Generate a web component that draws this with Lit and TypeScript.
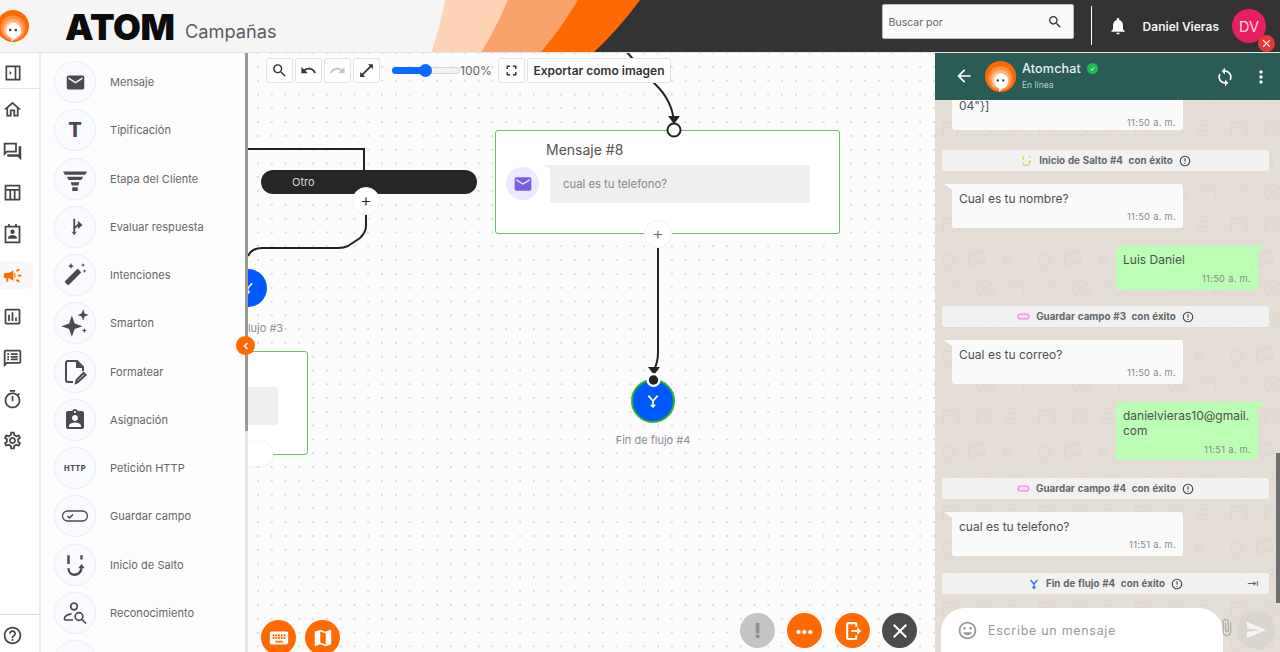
import { LitElement, html, css, unsafeCSS } from "lit";
import { customElement } from "lit/decorators.js";

const P: Record<string, string> = {
  email: "M20 4H4c-1.1 0-2 .9-2 2v12c0 1.1.9 2 2 2h16c1.1 0 2-.9 2-2V6c0-1.1-.9-2-2-2zm0 4l-8 5-8-5V6l8 5 8-5v2z",
  home: "M12 5.69l5 4.5V18h-2v-6H9v6H7v-7.81l5-4.5M12 3L2 12h3v8h6v-6h2v6h6v-8h3L12 3z",
  forum: "M15 4v7H5.17L4 12.17V4h11m2-2H2v15l4-4h11V2zm5 4h-3v9H6v3h12l4 4V6z",
  campaign: "M18 11v2h4v-2h-4zm-2 6.61c.96.71 2.21 1.65 3.2 2.39.4-.53.8-1.07 1.2-1.6-.99-.74-2.24-1.68-3.2-2.4-.4.54-.8 1.08-1.2 1.61zM20.4 5.6c-.4-.53-.8-1.07-1.2-1.6-.99.74-2.24 1.68-3.2 2.4.4.53.8 1.07 1.2 1.6.96-.72 2.21-1.65 3.2-2.4zM4 9c-1.1 0-2 .9-2 2v2c0 1.1.9 2 2 2h1v4h2v-4h1l5 3V6L8 9H4zm11.5 3c0-1.33-.58-2.53-1.5-3.35v6.69c.92-.81 1.5-2.01 1.5-3.34z",
  assess: "M19 3H5c-1.1 0-2 .9-2 2v14c0 1.1.9 2 2 2h14c1.1 0 2-.9 2-2V5c0-1.1-.9-2-2-2zm0 16H5V5h14v14zM7 10h2v7H7zm4-3h2v10h-2zm4 6h2v4h-2z",
  list: "M20 2H4c-1.1 0-2 .9-2 2v18l4-4h14c1.1 0 2-.9 2-2V4c0-1.1-.9-2-2-2zm0 14H5.17L4 17.17V4h16v12zM6 12h2v2H6zm0-3h2v2H6zm0-3h2v2H6zm4 6h8v2h-8zm0-3h8v2h-8zm0-3h8v2h-8z",
  timer: "M15 1H9v2h6V1zm-4 13h2V8h-2v6zm8.03-6.61l1.42-1.42c-.43-.51-.9-.99-1.41-1.41l-1.42 1.42C16.07 4.74 14.12 4 12 4c-4.97 0-9 4.03-9 9s4.02 9 9 9 9-4.03 9-9c0-2.12-.74-4.07-1.97-5.61zM12 20c-3.87 0-7-3.13-7-7s3.13-7 7-7 7 3.13 7 7-3.13 7-7 7z",
  gear: "M19.43 12.98c.04-.32.07-.64.07-.98 0-.34-.03-.66-.07-.98l2.11-1.65c.19-.15.24-.42.12-.64l-2-3.46c-.09-.16-.26-.25-.44-.25-.06 0-.12.01-.17.03l-2.49 1c-.52-.4-1.08-.73-1.69-.98l-.38-2.65C14.46 2.18 14.25 2 14 2h-4c-.25 0-.46.18-.49.42l-.38 2.65c-.61.25-1.17.59-1.69.98l-2.49-1c-.06-.02-.12-.03-.18-.03-.17 0-.34.09-.43.25l-2 3.46c-.13.22-.07.49.12.64l2.11 1.65c-.04.32-.07.65-.07.98 0 .33.03.66.07.98l-2.11 1.65c-.19.15-.24.42-.12.64l2 3.46c.09.16.26.25.44.25.06 0 .12-.01.17-.03l2.49-1c.52.4 1.08.73 1.69.98l.38 2.65c.03.24.24.42.49.42h4c.25 0 .46-.18.49-.42l.38-2.65c.61-.25 1.17-.59 1.69-.98l2.49 1c.06.02.12.03.18.03.17 0 .34-.09.43-.25l2-3.46c.12-.22.07-.49-.12-.64l-2.11-1.65zm-1.98-1.71c.04.31.05.52.05.73 0 .21-.02.43-.05.73l-.14 1.13.89.7 1.08.84-.7 1.21-1.27-.51-1.04-.42-.9.68c-.43.32-.84.56-1.25.73l-1.06.43-.16 1.13-.2 1.35h-1.4l-.19-1.35-.16-1.13-1.06-.43c-.43-.18-.83-.41-1.23-.71l-.91-.7-1.06.43-1.27.51-.7-1.21 1.08-.84.89-.7-.14-1.13c-.03-.31-.05-.54-.05-.74s.02-.43.05-.73l.14-1.13-.89-.7-1.08-.84.7-1.21 1.27.51 1.04.42.9-.68c.43-.32.84-.56 1.25-.73l1.06-.43.16-1.13.2-1.35h1.39l.19 1.35.16 1.13 1.06.43c.43.18.83.41 1.23.71l.91.7 1.06-.43 1.27-.51.7 1.21-1.07.85-.89.7.14 1.13zM12 8c-2.21 0-4 1.79-4 4s1.79 4 4 4 4-1.79 4-4-1.79-4-4-4zm0 6c-1.1 0-2-.9-2-2s.9-2 2-2 2 .9 2 2-.9 2-2 2z",
  help: "M11 18h2v-2h-2v2zm1-16C6.48 2 2 6.48 2 12s4.48 10 10 10 10-4.48 10-10S17.52 2 12 2zm0 18c-4.41 0-8-3.59-8-8s3.59-8 8-8 8 3.59 8 8-3.59 8-8 8zm0-14c-2.21 0-4 1.79-4 4h2c0-1.1.9-2 2-2s2 .9 2 2c0 2-3 1.75-3 5h2c0-2.25 3-2.5 3-5 0-2.21-1.79-4-4-4z",
  search: "M15.5 14h-.79l-.28-.27C15.41 12.59 16 11.11 16 9.5 16 5.91 13.09 3 9.5 3S3 5.91 3 9.5 5.91 16 9.5 16c1.61 0 3.09-.59 4.23-1.57l.27.28v.79l5 4.99L20.49 19l-4.99-5zm-6 0C7.01 14 5 11.99 5 9.5S7.01 5 9.5 5 14 7.01 14 9.5 11.99 14 9.5 14z",
  undo: "M12.5 8c-2.65 0-5.05.99-6.9 2.6L2 7v9h9l-3.62-3.62c1.39-1.16 3.16-1.88 5.12-1.88 3.54 0 6.55 2.31 7.6 5.5l2.37-.78C21.08 11.03 17.15 8 12.5 8z",
  redo: "M18.4 10.6C16.55 8.99 14.15 8 11.5 8c-4.65 0-8.58 3.03-9.96 7.22L3.9 16c1.05-3.19 4.05-5.5 7.6-5.5 1.95 0 3.73.72 5.12 1.88L13 16h9V7l-3.6 3.6z",
  expand: "M21 3h-7l2.6 2.6L5.6 16.6 3 14v7h7l-2.6-2.6 11-11L21 10z",
  full: "M7 14H5v5h5v-2H7v-3zm-2-4h2V7h3V5H5v5zm12 7h-3v2h5v-5h-2v3zM14 5v2h3v3h2V5h-5z",
  bell: "M12 22c1.1 0 2-.9 2-2h-4c0 1.1.9 2 2 2zm6-6v-5c0-3.07-1.63-5.64-4.5-6.32V4c0-.83-.67-1.5-1.5-1.5s-1.5.67-1.5 1.5v.68C7.64 5.36 6 7.92 6 11v5l-2 2v1h16v-1l-2-2z",
  back: "M20 11H7.83l5.59-5.59L12 4l-8 8 8 8 1.41-1.41L7.83 13H20v-2z",
  sync: "M12 4V1L8 5l4 4V6c3.31 0 6 2.69 6 6 0 1.01-.25 1.97-.7 2.8l1.46 1.46C19.54 15.03 20 13.57 20 12c0-4.42-3.58-8-8-8zm0 14c-3.31 0-6-2.69-6-6 0-1.01.25-1.97.7-2.8L5.24 7.74C4.46 8.97 4 10.43 4 12c0 4.42 3.58 8 8 8v3l4-4-4-4v3z",
  more: "M12 8c1.1 0 2-.9 2-2s-.9-2-2-2-2 .9-2 2 .9 2 2 2zm0 2c-1.1 0-2 .9-2 2s.9 2 2 2 2-.9 2-2-.9-2-2-2zm0 6c-1.1 0-2 .9-2 2s.9 2 2 2 2-.9 2-2-.9-2-2-2z",
  emoji: "M11.99 2C6.47 2 2 6.48 2 12s4.47 10 9.99 10C17.52 22 22 17.52 22 12S17.52 2 11.99 2zM12 20c-4.42 0-8-3.58-8-8s3.58-8 8-8 8 3.58 8 8-3.58 8-8 8zm3.5-9c.83 0 1.5-.67 1.5-1.5S16.33 8 15.5 8 14 8.67 14 9.5s.67 1.5 1.5 1.5zm-7 0c.83 0 1.5-.67 1.5-1.5S9.33 8 8.5 8 7 8.67 7 9.5 7.67 11 8.5 11zm3.5 6.5c2.33 0 4.31-1.46 5.11-3.5H6.89c.8 2.04 2.78 3.5 5.11 3.5z",
  attach: "M16.5 6v11.5c0 2.21-1.79 4-4 4s-4-1.79-4-4V5c0-1.38 1.12-2.5 2.5-2.5s2.5 1.12 2.5 2.5v10.5c0 .55-.45 1-1 1s-1-.45-1-1V6H10v9.5c0 1.38 1.12 2.5 2.5 2.5s2.5-1.12 2.5-2.5V5c0-2.21-1.79-4-4-4S7 2.79 7 5v12.5c0 3.04 2.46 5.5 5.5 5.5s5.5-2.46 5.5-5.5V6h-1.5z",
  send: "M2.01 21L23 12 2.01 3 2 10l15 2-15 2z",
  keyboard: "M20 5H4c-1.1 0-1.99.9-1.99 2L2 17c0 1.1.9 2 2 2h16c1.1 0 2-.9 2-2V7c0-1.1-.9-2-2-2zm-9 3h2v2h-2V8zm0 3h2v2h-2v-2zM8 8h2v2H8V8zm0 3h2v2H8v-2zm-1 2H5v-2h2v2zm0-3H5V8h2v2zm9 7H8v-2h8v2zm0-4h-2v-2h2v2zm0-3h-2V8h2v2zm3 3h-2v-2h2v2zm0-3h-2V8h2v2z",
  map: "M20.5 3l-.16.03L15 5.1 9 3 3.36 4.9c-.21.07-.36.25-.36.48V20.5c0 .28.22.5.5.5l.16-.03L9 18.9l6 2.1 5.64-1.9c.21-.07.36-.25.36-.48V3.5c0-.28-.22-.5-.5-.5zM15 19l-6-2.11V5l6 2.11V19z",
  close: "M19 6.41L17.59 5 12 10.59 6.41 5 5 6.41 10.59 12 5 17.59 6.41 19 12 13.41 17.59 19 19 17.59 13.41 12z",
  badge: "M19 3h-4.18C14.4 1.84 13.3 1 12 1c-1.3 0-2.4.84-2.82 2H5c-1.1 0-2 .9-2 2v14c0 1.1.9 2 2 2h14c1.1 0 2-.9 2-2V5c0-1.1-.9-2-2-2zm-7 0c.55 0 1 .45 1 1s-.45 1-1 1-1-.45-1-1 .45-1 1-1zm0 4c1.66 0 3 1.34 3 3s-1.34 3-3 3-3-1.34-3-3 1.34-3 3-3zm6 12H6v-1.4c0-2 4-3.1 6-3.1s6 1.1 6 3.1V19z",
  wand: "M8 6l-.9-2L5 3.100 7.100 2 8 0l.9 2L11 3.100 8.900 4zM20 4l-.7-1.500L18 2l1.300-.5L20 0l.7 1.500L22 2l-1.300.5zM21.500 10l-.6-1.400L19.500 8l1.400-.6.6-1.400.6 1.400 1.400.6-1.400.6zM15.300 6.300l2.400 2.400c.4.4.4 1 0 1.400L6 21.800c-.4.4-1 .4-1.400 0l-2.400-2.400c-.4-.4-.4-1 0-1.400L13.900 6.300c.4-.4 1-.4 1.400 0z",
  sparkle: "M9.5 6l2.2 6.3L18 14.5l-6.3 2.2L9.5 23l-2.2-6.3L1 14.5l6.3-2.2zM18.5 1l1.2 3.3L23 5.5l-3.3 1.2L18.5 10l-1.2-3.3L14 5.5l3.3-1.2zM19.5 16l.6 1.4 1.4.6-1.4.6-.6 1.4-.6-1.4-1.4-.6 1.4-.6z",
  funnel: "M1 5h22l-1.6 3H2.6zM4.5 10h15l-1.6 3H6.100zM8 15h8l-1 3H9zM9.500 19.500h5V23h-5z",
  panel: "M3 3h18v18H3zm2 2v14h9V5zm11 0v14h3V5zM8 9.500l2.500 2.500L8 14.500z",
  table: "M3 3h18v18H3zm2 2v3h14V5zm0 5v9h3.500v-9zm5.500 0v9h3v-9zm5 0v9H19v-9z",
  contact: "M7 1h2v2h6V1h2v2h4v20H3V3h4zM5 5v16h14V5zm7 2.500a2.500 2.500 0 1 1 0 5 2.500 2.500 0 0 1 0-5zM7 18v-1.500c0-1.800 3-2.800 5-2.800s5 1 5 2.800V18z",
  branch: "M10 2h2.200v9l3.300-3V4.500L21 9.500l-5.500 5V11l-3.300 3v4.500l2.300-1.500L11 22l-3.500-5 2.500 1.500z",
};

const ic = (n: string, s: number, cls = "") =>
  html`<svg class=${cls} width=${s} height=${s} viewBox="0 0 24 24" fill="currentColor"><path fill-rule="evenodd" d=${P[n]}></path></svg>`;

const logo = (s: number) => html`<svg width=${s} height=${s} viewBox="0 0 32 32">
  <circle cx="16" cy="16" r="16" fill="#ff6a00"></circle>
  <circle cx="16" cy="18" r="12.500" fill="#ff8f45"></circle>
  <circle cx="16" cy="19" r="10" fill="#ffb07c"></circle>
  <circle cx="16" cy="20" r="8" fill="#ffd9bd"></circle>
  <path d="M16 13a8 8 0 0 1 2 15.700l-3.500 3V28A8 8 0 0 1 16 13z" fill="#fff"></path>
  <circle cx="13.200" cy="20" r="1.200" fill="#333"></circle><circle cx="18.800" cy="20" r="1.200" fill="#333"></circle>
</svg>`;

const jump = (c: string, s: number) => html`<svg width=${s} height=${s} viewBox="0 0 24 24" fill="none" stroke=${c} stroke-width="2.200"><path d="M6 3v8M18 3v4M6 15c0 8 11 8 12 0"></path><path d="M15 15h6l-3-4z" fill=${c} stroke="none"></path></svg>`;
const pill = (c: string, s: number) => html`<svg width=${s} height=${s} viewBox="0 0 24 24" fill="#fbd9f7" stroke=${c} stroke-width="2.500"><rect x="2" y="7.500" width="20" height="9" rx="4.500"></rect></svg>`;
const fork = (c: string, s: number) => html`<svg width=${s} height=${s} viewBox="0 0 24 24" fill="none" stroke=${c} stroke-width="2.600"><path d="M5 4l7 8 7-8M12 12v8"></path><path d="M7.500 17.500h9L12 23z" fill=${c} stroke="none"></path></svg>`;

const panelItems: [string, unknown][] = [
  ["Mensaje", ic("email", 21)],
  ["Tipificación", html`<span class="t-glyph">T</span>`],
  ["Etapa del Cliente", ic("funnel", 26)],
  ["Evaluar respuesta", ic("branch", 20)],
  ["Intenciones", ic("wand", 24)],
  ["Smarton", ic("sparkle", 30)],
  ["Formatear", html`<svg width="28" height="28" viewBox="0 0 28 28" fill="none" stroke="currentColor" stroke-width="2"><path d="M12 24H7a2 2 0 0 1-2-2V5a2 2 0 0 1 2-2h9l6 6v4"></path><path d="M15 3v7h7" fill="currentColor" stroke="none"></path><path d="M17 24l-2 1 .6-3 7-7 2 2z"></path></svg>`],
  ["Asignación", ic("badge", 24)],
  ["Petición HTTP", html`<span class="http">HTTP</span>`],
  ["Guardar campo", html`<svg width="28" height="28" viewBox="0 0 28 28" fill="none" stroke="currentColor" stroke-width="1.300"><rect x="1.500" y="9" width="25" height="10" rx="5"></rect><path d="M6.500 14l2 2 3.500-3.500" stroke-width="1.500"></path></svg>`],
  ["Inicio de Salto", jump("currentColor", 26)],
  ["Reconocimiento", html`<svg width="26" height="26" viewBox="0 0 26 26" fill="none" stroke="currentColor" stroke-width="1.700"><circle cx="12" cy="6.500" r="3.300"></circle><path d="M2.500 20v-1.500c0-2.500 4-4.500 7-4.700M2.500 20H11"></path><circle cx="17" cy="16.500" r="3.800"></circle><path d="M20 19.500l4 4"></path></svg>`],
  ["", html`<svg width="20" height="20" viewBox="0 0 24 24" fill="currentColor"><path d="M12 2l3 4H9z"></path></svg>`],
];

const railItems = ["home", "forum", "table", "contact", "campaign", "assess", "list", "timer", "gear"];

const tile = encodeURIComponent(`<svg xmlns="http://www.w3.org/2000/svg" width="96" height="96" fill="none" stroke="#dcd4cc" stroke-width="1"><circle cx="14" cy="16" r="6"/><rect x="34" y="8" width="15" height="11" rx="2" transform="rotate(-12 41 13)"/><path d="M68 10l8 4-5 6zM10 44c5-6 12-6 16 0M8 70h15v13H8z"/><circle cx="50" cy="44" r="8"/><circle cx="50" cy="44" r="3"/><path d="M74 40q8-6 13 1t-2 12M40 74l11-6 6 11-11 6zM70 72h16M70 77h16M70 82h9"/></svg>`);

@customElement("app-root")
export class AppRoot extends LitElement {
  static styles = css`
    :host { display: block; width: 1280px; height: 652px; overflow: hidden; font-family: Inter, "Noto Sans", sans-serif; color: #555; background: #fff; }
    * { box-sizing: border-box; }
    svg { display: block; flex: none; }
    .header { position: relative; height: 53px; background: #f5f5f5; border-bottom: 1px solid #e4e4e4; display: flex; align-items: center; overflow: hidden; }
    .decor { position: absolute; inset: 0; }
    .logo-cell { position: relative; width: 65px; height: 100%; flex: none; overflow: hidden; }
    .logo-cell svg { position: absolute; left: -3px; top: 10px; }
    .brand { position: relative; font-size: 36px; font-weight: 900; color: #0b0b0b; letter-spacing: -0.4px; line-height: 1; margin-top: 1px; width: 120px; flex: none; }
    .section { position: relative; font-size: 18.200px; color: #565c66; margin-top: 9px; }
    .hright { position: relative; margin-left: auto; display: flex; align-items: center; height: 100%; padding-right: 14px; color: #fff; }
    .searchbox { width: 192px; height: 35px; margin-top: -9px; background: #fafafa; border: 1px solid #bbb; border-radius: 2px; display: flex; align-items: center; justify-content: space-between; padding: 1px 10px 0 6px; font-size: 10.500px; color: #666; }
    .searchbox svg { color: #333; }
    .divider { width: 1px; height: 39px; background: #fff; margin: -1px 16px 0 17px; }
    .bell { margin-right: 15px; }
    .uname { font-size: 12px; font-weight: 600; margin-right: 13px; color: #f2f2f2; }
    .avatar { position: relative; width: 34px; height: 34px; border-radius: 50%; background: #e91e63; display: flex; align-items: center; justify-content: center; font-size: 14.500px; color: #f7dbe5; }
    .avatar .x { position: absolute; right: -9px; bottom: -9px; width: 17px; height: 17px; border-radius: 50%; background: #e53935; color: #fff; display: flex; align-items: center; justify-content: center; }
    .body { position: relative; display: flex; height: 599px; }
    .rail { width: 41px; flex: none; background: #fff; border-right: 2px solid #ececec; display: flex; flex-direction: column; color: #454545; }
    .rail-top { height: 36px; border-bottom: 1px solid #e2e2e2; padding: 10px 0 0 3px; }
    .rail-list { flex: 1; }
    .rail-item { height: 41.400px; width: 33px; display: flex; align-items: center; padding-left: 2px; border-radius: 0 6px 6px 0; }
    .rail-item.on { color: #ff6a00; position: relative; }
    .rail-item.on::before { content: ""; position: absolute; left: 0; right: 0; top: 6px; bottom: 7px; background: #f8f8f8; border-radius: 0 6px 6px 0; }
    .rail-item.on svg { position: relative; }
    .rail-bot { height: 38px; border-top: 1px solid #dcdcdc; padding: 10px 0 0 2px; }
    .panel { position: relative; width: 207px; flex: none; background: #fdfdfd; overflow: hidden; padding-top: 5px; }
    .track { position: absolute; right: 0; top: 0; bottom: 0; width: 3.500px; background: #e6e6e6; }
    .thumb { height: 378px; background: #9a9a9a; }
    .pitem { height: 48.250px; display: flex; align-items: center; padding-left: 13px; }
    .pcircle { width: 42px; height: 42px; border-radius: 50%; background: #fafbfe; border: 1px solid #e8eef8; display: flex; align-items: center; justify-content: center; color: #4a4a52; flex: none; }
    .plabel { margin-left: 14px; font-size: 11px; color: #666; letter-spacing: .04px; }
    .t-glyph { font-size: 20px; font-weight: 800; line-height: 1; }
    .http { font-size: 7.500px; font-weight: 800; letter-spacing: .3px; }
    .toggle { position: absolute; left: 236px; top: 283px; width: 19px; height: 19px; border-radius: 50%; background: #ff6a00; color: #fff; display: flex; align-items: center; justify-content: center; z-index: 5; }
    .canvas { position: relative; flex: 1; overflow: hidden; background-color: #fcfcfc; background-image: radial-gradient(circle, #dcdcdc 0.7px, transparent 1px); background-size: 13.800px 13.800px; background-position: 3px 7px; }
    .edges { position: absolute; inset: 0; }
    .tbar { position: absolute; left: 18px; top: 5px; height: 25px; display: flex; align-items: center; }
    .tbtn { height: 25px; width: 27px; background: #fff; border: 1px solid #e2e2e2; border-radius: 3px; display: flex; align-items: center; justify-content: center; color: #333; margin-right: 2px; }
    .tbtn.dim { color: #c4c4c4; }
    .tbtn.wide { width: 144px; font-size: 12px; font-weight: 600; color: #333; margin: 0; }
    .slider { position: relative; width: 68px; height: 7px; margin-left: 10px; border: 1px solid #d5d5d5; background: #f2f2f2; border-radius: 4px; }
    .slider i { position: absolute; left: -1px; top: -1px; bottom: -1px; width: 32px; background: #0a6cff; border-radius: 4px; }
    .slider b { position: absolute; left: 26px; top: -4px; width: 13px; height: 13px; border-radius: 50%; background: #0a6cff; }
    .pct { font-size: 12px; color: #666; width: 38px; }
    .card { position: absolute; background: #fff; border: 1.500px solid #62c462; border-radius: 3px; }
    .card.main { left: 247px; top: 77px; width: 345px; height: 104px; }
    .card.side { left: -100px; top: 298px; width: 160px; height: 104px; }
    .ctitle { position: absolute; left: 50px; top: 10px; font-size: 14px; color: #555; }
    .cav { position: absolute; left: 10px; top: 36px; width: 33px; height: 33px; border-radius: 50%; background: #ece8fd; color: #7b5de8; display: flex; align-items: center; justify-content: center; }
    .cbub { position: absolute; left: 54px; top: 34px; width: 260px; height: 38px; background: #efefef; border-radius: 0 3px 3px 3px; padding-left: 13px; display: flex; align-items: center; font-size: 11.300px; color: #888; }
    .cbub::before { content: ""; position: absolute; left: -7px; top: 0; border-top: 4px solid #efefef; border-left: 7px solid transparent; }
    .sidebub { position: absolute; left: 0; right: 29px; top: 35px; height: 38px; background: #efefef; border-radius: 3px; }
    .sidepill { position: absolute; left: -100px; top: 389px; width: 125px; height: 24px; background: #fff; border-radius: 12px; box-shadow: 0 0 2px #ddd; }
    .otro { position: absolute; left: 13px; top: 117px; width: 216px; height: 24px; border-radius: 12px; background: #262626; color: #d8d8d8; font-size: 11px; display: flex; align-items: center; padding-left: 31px; }
    .plus { position: absolute; width: 28px; height: 28px; border-radius: 50%; background: #fff; border: 1px solid #eef1f8; display: flex; align-items: center; justify-content: center; font-size: 18px; font-weight: 300; color: #222; line-height: 1; }
    .plus.a { left: 104px; top: 134px; }
    .plus.b { left: 396px; top: 167px; color: #666; }
    .endnode { position: absolute; width: 44px; height: 44px; border-radius: 50%; background: #0058ff; color: #fff; display: flex; align-items: center; justify-content: center; }
    .endnode.n4 { left: 383px; top: 326px; border: 2.500px solid #2ab52a; }
    .endnode.n3 { left: -19px; top: 216px; width: 38px; height: 38px; }
    .nlabel { position: absolute; width: 110px; text-align: center; font-size: 11px; color: #8a8f98; }
    .nlabel.n4 { left: 350px; top: 380px; }
    .nlabel.n3 { left: -57px; top: 268px; }
    .fab { position: absolute; width: 35px; height: 35px; border-radius: 50%; background: #ff6a00; color: #fff; display: flex; align-items: center; justify-content: center; }
    .f1 { left: 13px; top: 567px; } .f2 { left: 57px; top: 567px; }
    .f3 { left: 492px; top: 560px; background: #c4c4c4; color: #8e8e8e; font-size: 20px; font-weight: 800; }
    .f4 { left: 539px; top: 560px; font-size: 13px; font-weight: 800; letter-spacing: .2px; }
    .f5 { left: 587px; top: 560px; } .f6 { left: 634px; top: 560px; background: #4c4c4c; }
    .chat { width: 345px; flex: none; display: flex; flex-direction: column; position: relative; background-color: #e4ddd6; background-image: url("data:image/svg+xml,${unsafeCSS(tile)}"); }
    .chead { height: 47px; background: #2a5c55; color: #fff; display: flex; align-items: center; flex: none; padding: 0 0 2px 19px; position: relative; z-index: 2; }
    .chead .av { margin-left: 11px; margin-right: 6px; margin-top: 2px; }
    .cname { font-size: 12.500px; font-weight: 500; display: flex; align-items: center; gap: 6px; color: #e8efee; letter-spacing: .2px; line-height: 15px; }
    .verified { width: 11px; height: 11px; border-radius: 50%; background: #1fb954; display: flex; align-items: center; justify-content: center; }
    .cstat { font-size: 8.500px; color: #b8cbc8; margin-top: 4px; }
    .cact { margin-left: auto; display: flex; align-items: center; gap: 16px; padding-right: 9px; margin-top: 2px; }
    .msgs { flex: 1; min-height: 0; overflow: hidden; display: flex; flex-direction: column; justify-content: flex-end; padding: 0 11px 14px 7px; }
    .sys { position: relative; flex: none; height: 21px; background: #f1f1f1; border-radius: 2px; display: flex; align-items: center; justify-content: center; gap: 6px; font-size: 9.800px; font-weight: 700; color: #666; }
    .sys .txt { word-spacing: .5px; white-space: pre; }
    .sys .go { position: absolute; right: 10px; top: 3px; font-size: 12px; font-weight: 400; }
    .sys .info { color: #444; }
    .bub { position: relative; flex: none; background: #fafafa; width: 231px; margin-left: 10px; padding: 7px 7px 0; border-radius: 0 3px 3px 3px; font-size: 12px; color: #4f4f4f; line-height: 16px; height: 44px; }
    .bub::before { content: ""; position: absolute; left: -8px; top: 0; border-top: 6px solid #fafafa; border-left: 8px solid transparent; }
    .bub .time { position: absolute; right: 7px; bottom: 2px; font-size: 9.300px; color: #8a8a8a; letter-spacing: .3px; line-height: 18px; }
    .bub.cut { padding-top: 12px; }
    .bub.cut .time { bottom: -2px; }
    .bub.me { align-self: flex-end; width: 142px; background: #baffb3; margin-left: 0; margin-right: 11px; border-radius: 3px 0 3px 3px; padding-top: 6px; }
    .bub.me::before { left: auto; right: -8px; border-top-color: #baffb3; border-left: 0; border-right: 8px solid transparent; }
    .bub.tall { height: 58px; line-height: 15px; }
    .bub.tall .time { bottom: 1px; }
    .mt13 { margin-top: 13px; } .mt16 { margin-top: 16px; } .mt17 { margin-top: 17px; } .mt18 { margin-top: 18px; } .mt20 { margin-top: 20px; }
    .inputrow { height: 44px; flex: none; display: flex; align-items: flex-start; padding-left: 6px; position: relative; }
    .inputbox { width: 282px; height: 50px; border-radius: 24px 24px 0 0; background: #fff; display: flex; align-items: center; padding: 0 0 6px 16px; color: #9a9a9a; font-size: 12.500px; letter-spacing: .7px; gap: 10px; }
    .clip { color: #aaa; margin: 10px 0 0 -6px; }
    .sendb { width: 38px; height: 38px; border-radius: 50%; background: #dbd5cf; color: #f4f4f4; display: flex; align-items: center; justify-content: center; margin: 3px 0 0 1px; }
    .cscroll { position: absolute; right: 0; top: 400px; width: 4px; height: 150px; background: #6e6e6e; z-index: 3; }
  `;

  render() {
    return html`
      <div class="header">
        <svg class="decor" viewBox="0 0 1280 53" preserveAspectRatio="none">
          <path d="M445 0Q440 28 431 53H1280V0z" fill="#fdd3b6"></path>
          <path d="M508 0Q496 28 481 53H1280V0z" fill="#f9a26c"></path>
          <path d="M578 0Q560 30 540 53H1280V0z" fill="#ff6a00"></path>
          <path d="M640 0Q618 30 593 53H1280V0z" fill="#333"></path>
        </svg>
        <div class="logo-cell">${logo(32)}</div>
        <div class="brand">ATOM</div>
        <div class="section">Campañas</div>
        <div class="hright">
          <div class="searchbox"><span>Buscar por</span>${ic("search", 16)}</div>
          <div class="divider"></div>
          <div class="bell">${ic("bell", 20)}</div>
          <div class="uname">Daniel Vieras</div>
          <div class="avatar">DV<span class="x">${ic("close", 13)}</span></div>
        </div>
      </div>
      <div class="body">
        <nav class="rail">
          <div class="rail-top">${ic("panel", 20)}</div>
          <div class="rail-list">
            ${railItems.map((n) => html`<div class="rail-item ${n === "campaign" ? "on" : ""}">${ic(n, 21)}</div>`)}
          </div>
          <div class="rail-bot">${ic("help", 21)}</div>
        </nav>
        <aside class="panel">
          ${panelItems.map(([l, i]) => html`<div class="pitem"><div class="pcircle">${i}</div><span class="plabel">${l}</span></div>`)}
          <div class="track"><div class="thumb"></div></div>
        </aside>
        <div class="toggle"><svg width="10" height="10" viewBox="0 0 10 10" fill="none" stroke="currentColor" stroke-width="1.600"><path d="M6.500 2L3.500 5l3 3"></path></svg></div>
        <main class="canvas">
          <div class="card side"><div class="sidebub"></div></div>
          <div class="sidepill"></div>
          <svg class="edges" viewBox="248 53 687 599" width="687" height="599" fill="none" stroke="#222" stroke-width="2">
            <path d="M248 149H364V172"></path>
            <path d="M366 214V226Q366 232 360 238L348 246Q344 248 338 248H262Q252 248 248 256"></path>
            <path d="M625 50L655 84Q672 100 674 122"></path>
            <path d="M658 248V352Q658 362 654 370"></path>
            <path d="M668 116H680L674 124z" fill="#222" stroke="none"></path>
            <path d="M648 367H660L654 375z" fill="#222" stroke="none"></path>
          </svg>
          <div class="otro">Otro</div>
          <div class="plus a">+</div>
          <div class="card main">
            <div class="ctitle">Mensaje #8</div>
            <div class="cav">${ic("email", 20)}</div>
            <div class="cbub">cual es tu telefono?</div>
          </div>
          <div class="plus b">+</div>
          <svg class="edges" viewBox="248 53 687 599" width="687" height="599" fill="none">
            <circle cx="674" cy="130" r="6.500" fill="#fff" stroke="#222" stroke-width="2"></circle>
          </svg>
          <div class="endnode n3">${fork("#fff", 14)}</div>
          <div class="nlabel n3">Fin de flujo #3</div>
          <div class="endnode n4">${fork("#fff", 16)}</div>
          <svg class="edges" viewBox="248 53 687 599" width="687" height="599">
            <circle cx="653.500" cy="380" r="7" fill="#fff"></circle>
            <circle cx="653.500" cy="380" r="4.700" fill="#222"></circle>
          </svg>
          <div class="nlabel n4">Fin de flujo #4</div>
          <div class="tbar">
            <div class="tbtn">${ic("search", 17)}</div>
            <div class="tbtn">${ic("undo", 17)}</div>
            <div class="tbtn dim">${ic("redo", 17)}</div>
            <div class="tbtn">${ic("expand", 17)}</div>
            <div class="slider"><i></i><b></b></div>
            <div class="pct">100%</div>
            <div class="tbtn">${ic("full", 17)}</div>
            <div class="tbtn wide">Exportar como imagen</div>
          </div>
          <div class="fab f1">${ic("keyboard", 22)}</div>
          <div class="fab f2">${ic("map", 22)}</div>
          <div class="fab f3">!</div>
          <div class="fab f4">•••</div>
          <div class="fab f5"><svg width="20" height="20" viewBox="0 0 24 24" fill="none" stroke="currentColor" stroke-width="2.500"><path d="M16 7V4a1.500 1.500 0 0 0-1.500-1.500h-8A1.500 1.500 0 0 0 5 4v16a1.500 1.500 0 0 0 1.500 1.500h8A1.500 1.500 0 0 0 16 20v-3"></path><path d="M10 12h8"></path><path d="M17 7.500l5 4.500-5 4.500z" fill="currentColor" stroke="none"></path></svg></div>
          <div class="fab f6">${ic("close", 24)}</div>
        </main>
        <section class="chat">
          <div class="chead">
            ${ic("back", 20)}
            <div class="av">${logo(31)}</div>
            <div>
              <div class="cname">Atomchat <span class="verified"><svg width="7" height="7" viewBox="0 0 10 10" fill="none" stroke="#dff5e6" stroke-width="1.400"><path d="M2 5.500l2 2 4-4.500"></path></svg></span></div>
              <div class="cstat">En línea</div>
            </div>
            <div class="cact">${ic("sync", 20)}${ic("more", 20)}</div>
          </div>
          <div class="msgs">
            <div class="bub cut"><span>04"}]</span><span class="time">11:50 a. m.</span></div>
            ${this.sys(jump("#c7dc4a", 13), "Inicio de Salto #4", "mt20")}
            <div class="bub mt13">Cual es tu nombre?<span class="time">11:50 a. m.</span></div>
            <div class="bub me mt18">Luis Daniel<span class="time">11:50 a. m.</span></div>
            ${this.sys(pill("#f48ee8", 13), "Guardar campo #3", "mt16")}
            <div class="bub mt13">Cual es tu correo?<span class="time">11:50 a. m.</span></div>
            <div class="bub me tall mt18">danielvieras10@gmail.<br />com<span class="time">11:51 a. m.</span></div>
            ${this.sys(pill("#f48ee8", 13), "Guardar campo #4", "mt18")}
            <div class="bub mt13">cual es tu telefono?<span class="time">11:51 a. m.</span></div>
            ${this.sys(fork("#2b6cf0", 12), "Fin de flujo #4", "mt17", true)}
          </div>
          <div class="inputrow">
            <div class="inputbox">${ic("emoji", 21)}<span>Escribe un mensaje</span></div>
            <div class="clip">${ic("attach", 19)}</div>
            <div class="sendb">${ic("send", 22)}</div>
          </div>
          <div class="cscroll"></div>
        </section>
      </div>
    `;
  }

  private sys(icon: unknown, t: string, cls: string, go = false) {
    return html`<div class="sys ${cls}">${icon}<span class="txt">${t}  con éxito</span><span class="info"><svg width="12" height="12" viewBox="0 0 24 24" fill="none" stroke="currentColor" stroke-width="2.200"><circle cx="12" cy="12" r="9.500"></circle><path d="M12 6.500v7M12 16v2"></path></svg></span>${go ? html`<span class="go">⇥</span>` : ""}</div>`;
  }
}
